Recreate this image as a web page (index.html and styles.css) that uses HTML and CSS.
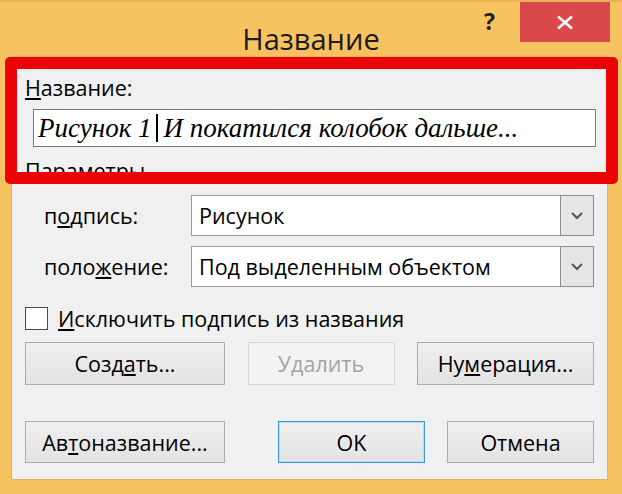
FILE: index.html
```html
<!DOCTYPE html>
<html lang="ru">
<head>
    <meta charset="UTF-8">
    <meta name="viewport" content="width=device-width, initial-scale=1.0">
    <title>Название</title>
    <link rel="stylesheet" href="styles.css">
</head>
<body>
    <div class="window">
        <div class="titlebar">
            <div class="title">Название</div>
            <div class="help">?</div>
            <div class="close">
                <svg width="18" height="15" viewBox="0 0 18 15">
                    <path d="M2 1.5 L16 13.5 M16 1.5 L2 13.5" stroke="#fff" stroke-width="2.6" fill="none"/>
                </svg>
            </div>
        </div>
        <div class="client">
            <div class="label"><u>Н</u>азвание:</div>
            <div class="caption-box">
                <span>Рисунок 1</span><span class="cursor"></span><span>И покатился колобок дальше...</span>
            </div>
            <div class="label section">Параметры</div>

            <div class="param-row">
                <span class="param-label">п<u>о</u>дпись:</span>
                <div class="combo">
                    <span class="combo-value">Рисунок</span>
                    <span class="combo-btn">
                        <svg width="12" height="8" viewBox="0 0 12 8"><path d="M1 1 L6 6 L11 1" stroke="#555" stroke-width="2" fill="none"/></svg>
                    </span>
                </div>
            </div>
            <div class="param-row second">
                <span class="param-label">поло<u>ж</u>ение:</span>
                <div class="combo">
                    <span class="combo-value">Под выделенным объектом</span>
                    <span class="combo-btn">
                        <svg width="12" height="8" viewBox="0 0 12 8"><path d="M1 1 L6 6 L11 1" stroke="#555" stroke-width="2" fill="none"/></svg>
                    </span>
                </div>
            </div>

            <div class="check-row">
                <span class="check"></span>
                <span><u>И</u>сключить подпись из названия</span>
            </div>

            <div class="btn-row">
                <button class="btn wide">Созд<u>а</u>ть...</button>
                <button class="btn narrow" disabled>Удалить</button>
                <button class="btn numbering">Ну<u>м</u>ерация...</button>
            </div>

            <div class="btn-row bottom">
                <button class="btn wide">Ав<u>т</u>оназвание...</button>
                <div class="btn-group">
                    <button class="btn narrow default">OK</button>
                    <button class="btn narrow">Отмена</button>
                </div>
            </div>
        </div>
        <!-- red frame drawn over the screenshot -->
        <div class="highlight"></div>
    </div>
</body>
</html>
```

FILE: styles.css
```css
*{
    margin: 0;
    padding: 0;
    box-sizing: border-box;
}
body{
    background: #f6c360;
    font-family: "Open Sans", "Noto Sans", sans-serif;
    font-size: 21.5px;
    color: #000;
}
.window{
    position: relative;
    width: 622px;
    height: 494px;
    background: #f6c360;
    border-top: 2px solid #e9b452;
}
.titlebar{
    position: relative;
    height: 54px;
}
.title{
    padding-top: 17px;
    text-align: center;
    font-size: 29px;
    line-height: 40px;
    color: #1b1b1b;
}
.help{
    position: absolute;
    left: 484px;
    top: 3px;
    font-size: 23px;
    font-weight: bold;
    color: #222;
}
.close{
    position: absolute;
    left: 520px;
    top: 0;
    width: 90px;
    height: 40px;
    background: #d9494b;
    display: flex;
    align-items: center;
    justify-content: center;
}
.client{
    margin-left: 11px;
    width: 597px;
    height: 424px;
    background: #f0f0f0;
    border: 1px solid #dfb65e;
    padding: 0 13px;
}
.label{
    margin-top: 17px;
    line-height: 28px;
}
.caption-box{
    margin: 7px 0 0 8px;
    width: 563px;
    height: 38px;
    background: #fff;
    border: 1px solid #7a7a7a;
    padding-left: 4px;
    display: flex;
    align-items: center;
    font-family: "Liberation Serif", serif;
    font-style: italic;
    font-size: 27px;
    white-space: nowrap;
}
.cursor{
    width: 2px;
    height: 28px;
    background: #000;
    margin: 0 6px 0 4px;
}
.section{
    margin-top: 10px;
}
.param-row{
    margin-top: 10px;
    display: flex;
    align-items: center;
    height: 41px;
}
.param-row.second{
    margin-top: 10px;
}
.param-label{
    width: 166px;
    padding-left: 19px;
}
.combo{
    flex: 1;
    height: 41px;
    display: flex;
    background: #fff;
    border: 1px solid #9a9a9a;
}
.combo-value{
    flex: 1;
    padding-left: 7px;
    line-height: 39px;
}
.combo-btn{
    width: 34px;
    margin: -1px -1px -1px 0;
    background: #e6e6e6;
    border: 1px solid #8c8c8c;
    display: flex;
    align-items: center;
    justify-content: center;
}
.check-row{
    margin-top: 20px;
    height: 23px;
    display: flex;
    align-items: center;
    gap: 10px;
}
.check{
    width: 23px;
    height: 23px;
    background: #fff;
    border: 1px solid #4a4a4a;
}
.btn-row{
    margin-top: 12px;
    display: flex;
    justify-content: space-between;
}
.btn-row.bottom{
    margin-top: 36px;
}
.btn-group{
    display: flex;
    gap: 22px;
}
.btn{
    height: 43px;
    font-family: inherit;
    font-size: 21.5px;
    color: #000;
    background: linear-gradient(#f0f0f0, #e3e3e3);
    border: 1px solid #acacac;
}
.bottom .btn{
    height: 42px;
}
.btn.wide{
    width: 200px;
}
.btn.narrow{
    width: 147px;
}
.btn.numbering{
    width: 177px;
}
.btn:disabled{
    background: #f3f3f3;
    border-color: #d6d6d6;
    color: #a3a3a3;
}
.btn.default{
    border-color: #3b98d3;
    box-shadow: inset 0 0 0 1px #b5def5;
}
.highlight{
    position: absolute;
    left: 5px;
    top: 55px;
    width: 613px;
    height: 127px;
    border: 12px solid #ea0408;
    border-radius: 5px;
}
```
